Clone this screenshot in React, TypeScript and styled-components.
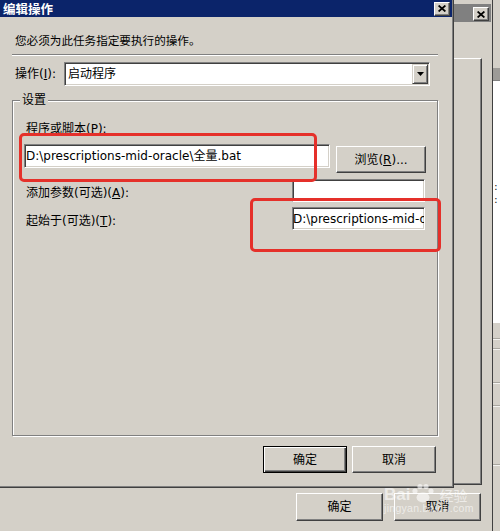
import styled, { createGlobalStyle } from "styled-components";

const FONT = `"DejaVu Sans", "Noto Sans CJK SC", sans-serif`;

const GlobalStyle = createGlobalStyle`
  html, body {
    margin: 0;
    padding: 0;
  }
  body {
    background: #d4d0c8;
    overflow: hidden;
  }
`;

const CloseGlyph = () => (
  <svg width="8" height="7" viewBox="0 0 8 7">
    <path d="M0.6 0.5 L7.4 6.5 M7.4 0.5 L0.6 6.5" stroke="#000" strokeWidth="1.7" />
  </svg>
);

const DropArrow = () => (
  <svg width="7" height="4" viewBox="0 0 7 4">
    <path d="M0 0h7L3.5 4z" fill="#000" />
  </svg>
);

const Paw = () => (
  <svg width="24" height="20" viewBox="0 0 24 20" fill="currentColor">
    <circle cx="4" cy="8" r="2.6" />
    <circle cx="9" cy="3.5" r="2.6" />
    <circle cx="15" cy="3.5" r="2.6" />
    <circle cx="20" cy="8" r="2.6" />
    <ellipse cx="12" cy="14.5" rx="6.5" ry="5" />
  </svg>
);

export default function App() {
  return (
    <>
      <GlobalStyle />
      <Desktop>
        <SideWindow>
          <SideHeader />
          <SideBand />
          <SideList>
            <SideColon>:</SideColon>
            <SideColon>:</SideColon>
          </SideList>
          <SideFooter>
            <SideRule $offset={15} />
            <SideRule $offset={8} />
            <SideRule $offset={32} />
            <SideRule $offset={21} />
            <SideRule $offset={57} />
          </SideFooter>
        </SideWindow>

        <BackWindow>
          <BackTitleBar>
            <CloseButton>
              <CloseGlyph />
            </CloseButton>
          </BackTitleBar>
          <BackPanel />
          <BackButtons>
            <Button $width={87} $height={28}>确定</Button>
            <Button $width={87} $height={28}>取消</Button>
          </BackButtons>
        </BackWindow>

        <Dialog>
          <TitleBar>
            <Title>编辑操作</Title>
            <CloseButton>
              <CloseGlyph />
            </CloseButton>
          </TitleBar>
          <Body>
            <Instruction>您必须为此任务指定要执行的操作。</Instruction>
            <Separator />
            <ActionRow>
              <ActionLabel>
                操作(<u>I</u>):
              </ActionLabel>
              <Select>
                <SelectText>启动程序</SelectText>
                <DropButton>
                  <DropArrow />
                </DropButton>
              </Select>
            </ActionRow>

            <GroupBox>
              <GroupLegend>设置</GroupLegend>
              <FieldLabel>
                程序或脚本(<u>P</u>):
              </FieldLabel>
              <PathRow>
                <Field $width={306} $height={24}>
                  D:\prescriptions-mid-oracle\全量.bat
                </Field>
                <BrowseButton $width={90} $height={27}>
                  浏览(<u>R</u>)...
                </BrowseButton>
              </PathRow>
              <OptionRow $gap={6}>
                <OptionLabel>
                  添加参数(可选)(<u>A</u>):
                </OptionLabel>
                <Field $width={133} $height={23} />
              </OptionRow>
              <OptionRow $gap={5}>
                <OptionLabel>
                  起始于(可选)(<u>T</u>):
                </OptionLabel>
                <Field $width={133} $height={23} $tight>
                  D:\prescri
                  <Caret />
                  ptions-mid-oracle
                </Field>
              </OptionRow>
            </GroupBox>

            <Footer>
              <Button $width={84} $height={27} $default>
                确定
              </Button>
              <Button $width={84} $height={27}>
                取消
              </Button>
            </Footer>
          </Body>
        </Dialog>

        <Highlight $x={19} $y={133} $w={298} $h={49} />
        <Highlight $x={250} $y={198} $w={191} $h={54} />

        <Watermark>
          <WatermarkLogo>
            <span>Bai</span>
            <Paw />
            <WatermarkCn>经验</WatermarkCn>
          </WatermarkLogo>
          <WatermarkUrl>jingyan.baidu.com</WatermarkUrl>
        </Watermark>
      </Desktop>
    </>
  );
}

const Desktop = styled.div`
  position: relative;
  width: 500px;
  height: 531px;
  overflow: hidden;
  background: #d4d0c8;
  font-family: ${FONT};
  font-size: 12px;
  color: #000;
`;

/* window peeking in at the far right */
const SideWindow = styled.div`
  position: absolute;
  top: 0;
  bottom: 0;
  left: 493px;
  width: 7px;
  display: flex;
  flex-direction: column;
  background: #d4d0c8;
`;

const SideHeader = styled.div`
  flex: none;
  height: 68px;
`;

const SideBand = styled.div`
  flex: none;
  height: 12px;
  background: #9d9b97;
  border-bottom: 1px solid #808080;
`;

const SideList = styled.div`
  flex: none;
  height: 242px;
  display: flex;
  flex-direction: column;
  padding-top: 99px;
  box-sizing: border-box;
  background: #fff;
`;

const SideColon = styled.span`
  font-size: 11px;
  line-height: 13px;
  padding-left: 1px;
  color: #222;
`;

const SideFooter = styled.div`
  flex: 1;
  display: flex;
  flex-direction: column;
`;

const SideRule = styled.div<{ $offset: number }>`
  margin-top: ${({ $offset }) => $offset}px;
  height: 1px;
  background: #a9a69f;
  border-bottom: 1px solid #f4f3f0;
`;

/* parent dialog behind */
const BackWindow = styled.div`
  position: absolute;
  top: 0;
  left: -40px;
  right: 7px;
  bottom: -10px;
  display: flex;
  flex-direction: column;
  padding: 4px 1px 0 4px;
  background: #d4d0c8;
  border-right: 1px solid #404040;
`;

const BackTitleBar = styled.div`
  flex: none;
  height: 18px;
  display: flex;
  justify-content: flex-end;
  align-items: flex-end;
  padding: 0 2px 1px 0;
  box-sizing: border-box;
  background: #808080;
`;

const BackPanel = styled.div`
  flex: none;
  height: 427px;
  margin: 36px 9px 0 0;
  box-sizing: border-box;
  border-top: 1px solid #fff;
  border-left: 1px solid #fff;
  border-right: 1px solid #404040;
  border-bottom: 1px solid #404040;
  box-shadow: inset -1px -1px #808080;
`;

const BackButtons = styled.div`
  display: flex;
  justify-content: flex-end;
  gap: 11px;
  margin-top: 8px;
  padding-right: 10px;
`;

/* active dialog */
const Dialog = styled.div`
  position: absolute;
  top: 0;
  left: 0;
  width: 454px;
  height: 488px;
  box-sizing: border-box;
  padding: 0 2px 2px 0;
  display: flex;
  flex-direction: column;
  background: #d4d0c8;
  box-shadow: inset -1px -1px #404040, inset -2px -2px #808080;
`;

const TitleBar = styled.div`
  flex: none;
  height: 17px;
  display: flex;
  align-items: center;
  justify-content: space-between;
  padding: 0 2px 0 3px;
  background: #0b246a;
`;

const Title = styled.span`
  color: #fff;
  font-weight: bold;
  font-size: 12.5px;
  line-height: 17px;
  font-family: "Noto Sans CJK SC", sans-serif;
`;

const CloseButton = styled.div`
  width: 16px;
  height: 14px;
  box-sizing: border-box;
  display: flex;
  align-items: center;
  justify-content: center;
  background: #d4d0c8;
  border: 1px solid;
  border-color: #fff #404040 #404040 #fff;
  box-shadow: inset -1px -1px #808080;
`;

const Body = styled.div`
  flex: 1;
  display: flex;
  flex-direction: column;
  padding: 0 14px 0 12px;
`;

const Instruction = styled.div`
  margin-top: 16px;
  padding-left: 3px;
  font-size: 11.6px;
  line-height: 16px;
`;

const Separator = styled.div`
  margin-top: 5px;
  height: 1px;
  background: #808080;
  border-bottom: 1px solid #fff;
`;

const ActionRow = styled.div`
  display: flex;
  align-items: center;
  height: 24px;
  margin-top: 6px;
  padding-left: 3px;
`;

const ActionLabel = styled.span`
  width: 49px;
  line-height: 16px;
`;

const sunken = `
  box-sizing: border-box;
  background: #fff;
  border: 1px solid;
  border-color: #808080 #fff #fff #808080;
  box-shadow: inset 1px 1px #404040, inset -1px -1px #d4d0c8;
`;

const Select = styled.div`
  ${sunken}
  width: 366px;
  height: 24px;
  display: flex;
  align-items: center;
  padding: 1px 1px 1px 3px;
`;

const SelectText = styled.span`
  flex: 1;
  line-height: 16px;
`;

const DropButton = styled.div`
  width: 16px;
  height: 20px;
  box-sizing: border-box;
  display: flex;
  align-items: center;
  justify-content: center;
  background: #d4d0c8;
  border: 1px solid;
  border-color: #d4d0c8 #404040 #404040 #d4d0c8;
  box-shadow: inset 1px 1px #fff, inset -1px -1px #808080;
`;

const GroupBox = styled.div`
  position: relative;
  margin-top: 14px;
  height: 336px;
  box-sizing: border-box;
  padding: 20px 11px 0;
  border: 1px solid #808080;
  box-shadow: inset 1px 1px #fff, 1px 1px #fff;
`;

const GroupLegend = styled.span`
  position: absolute;
  top: -9px;
  left: 7px;
  padding: 0 2px;
  line-height: 16px;
  background: #d4d0c8;
`;

const FieldLabel = styled.div`
  padding-left: 2px;
  line-height: 16px;
`;

const PathRow = styled.div`
  display: flex;
  align-items: flex-start;
  margin-top: 7px;
`;

const Field = styled.div<{ $width: number; $height: number; $tight?: boolean }>`
  ${sunken}
  width: ${({ $width }) => $width}px;
  height: ${({ $height }) => $height}px;
  display: flex;
  align-items: center;
  padding: 0 ${({ $tight }) => ($tight ? 0 : 1)}px;
  overflow: hidden;
  white-space: nowrap;
  line-height: 16px;
`;

const Caret = styled.span`
  display: inline-block;
  width: 1px;
  height: 16px;
  background: #000;
`;

const Button = styled.div<{ $width: number; $height: number; $default?: boolean }>`
  width: ${({ $width }) => $width}px;
  height: ${({ $height }) => $height}px;
  box-sizing: border-box;
  display: flex;
  align-items: center;
  justify-content: center;
  background: #d4d0c8;
  border: 1px solid;
  border-color: ${({ $default }) => ($default ? "#000" : "#fff #404040 #404040 #fff")};
  box-shadow: ${({ $default }) =>
    $default
      ? "inset 1px 1px #fff, inset -1px -1px #404040, inset -2px -2px #808080"
      : "inset -1px -1px #808080"};
  line-height: 16px;
`;

const BrowseButton = styled(Button)`
  margin: 2px 0 0 6px;
`;

const OptionRow = styled.div<{ $gap: number }>`
  display: flex;
  align-items: center;
  justify-content: space-between;
  margin-top: ${({ $gap }) => $gap}px;
  padding-right: 1px;
`;

const OptionLabel = styled.span`
  padding: 4px 0 0 2px;
  line-height: 16px;
`;

const Footer = styled.div`
  display: flex;
  justify-content: flex-end;
  gap: 5px;
  margin-top: 10px;
  padding-right: 2px;
`;

/* red annotation boxes drawn over the screenshot */
const Highlight = styled.div<{ $x: number; $y: number; $w: number; $h: number }>`
  position: absolute;
  left: ${({ $x }) => $x}px;
  top: ${({ $y }) => $y}px;
  width: ${({ $w }) => $w}px;
  height: ${({ $h }) => $h}px;
  box-sizing: border-box;
  border: 3px solid #e5302a;
  border-radius: 5px;
  pointer-events: none;
`;

const Watermark = styled.div`
  position: absolute;
  left: 384px;
  top: 477px;
  display: flex;
  flex-direction: column;
  color: rgba(255, 255, 255, 0.6);
  pointer-events: none;
`;

const WatermarkLogo = styled.div`
  display: flex;
  align-items: flex-end;
  gap: 1px;
  height: 26px;
  font: bold 17px "Liberation Sans", sans-serif;
  line-height: 17px;
`;

const WatermarkCn = styled.span`
  font: 14px "Noto Sans CJK SC", sans-serif;
  line-height: 16px;
  margin-left: 3px;
`;

const WatermarkUrl = styled.span`
  font: 10.5px "Liberation Sans", sans-serif;
  line-height: 11px;
  letter-spacing: 0.3px;
`;
